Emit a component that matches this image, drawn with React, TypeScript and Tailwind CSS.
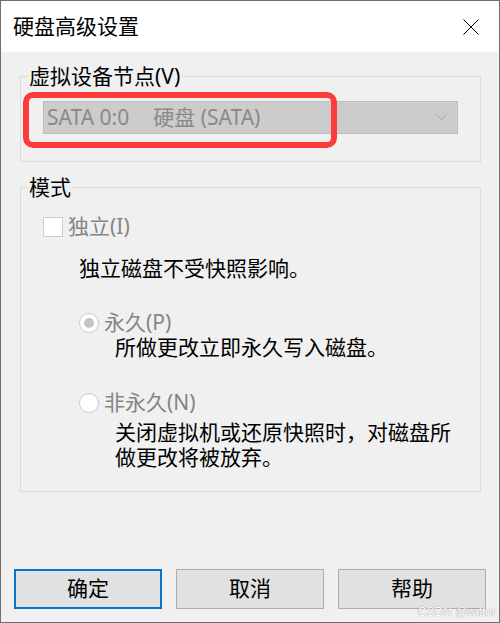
import React from 'react';

const font = "font-['Noto_Sans','Noto_Sans_CJK_SC',sans-serif]";

const DialogButton = ({ label, focused }: { label: string; focused?: boolean }) => (
  <button
    className={
      focused
        ? 'w-[148px] h-[40px] bg-[#e1e1e1] border-2 border-[#0078d7] text-[21px] text-black'
        : 'w-[148px] h-[40px] bg-[#e1e1e1] border border-[#adadad] text-[21px] text-black'
    }
  >
    {label}
  </button>
);

const App = () => {
  return (
    <div className={`relative w-[500px] h-[623px] border border-[#6f6f6f] bg-[#f0f0f0] flex flex-col ${font}`}>
      {/* title bar */}
      <div className="h-[51px] bg-white flex items-center justify-between pl-[12px] pr-[20px]">
        <span className="text-[21px] text-black leading-none">硬盘高级设置</span>
        <svg width="16" height="16" viewBox="0 0 16 16">
          <path d="M0.5 0.5 L15.5 15.5 M15.5 0.5 L0.5 15.5" stroke="#000" strokeWidth="1" />
        </svg>
      </div>

      <div className="flex-1 px-[19px] pt-[11px]">
        <fieldset className="w-[461px] border border-[#dcdcdc] px-[22px] pb-[27px]">
          <legend className="-ml-[15px] px-[1px] text-[21px] leading-[27px] text-black">虚拟设备节点(V)</legend>
          <div className="mt-[11px] h-[33px] bg-[#cccccc] border border-[#bdbdbd] flex items-center justify-between pl-[3px] pr-[10px] text-[21px] text-[#898989]">
            <span className="flex gap-[24px]">
              <span>SATA 0:0</span>
              <span>硬盘 (SATA)</span>
            </span>
            <svg width="11" height="7" viewBox="0 0 11 7">
              <path d="M0.5 0.5 L5.5 5.5 L10.5 0.5" fill="none" stroke="#a3a3a3" strokeWidth="1" />
            </svg>
          </div>
        </fieldset>

        <fieldset className="mt-[12px] w-[461px] border border-[#dcdcdc] pl-[22px] pr-[10px] pb-[21px]">
          <legend className="-ml-[15px] px-[1px] text-[21px] leading-[27px] text-black">模式</legend>

          <div className="mt-[13px] h-[25px] flex items-center">
            <span className="w-[20px] h-[20px] bg-white border border-[#cccccc]" />
            <span className="ml-[5px] text-[21px] leading-[25px] text-[#858585]">独立(I)</span>
          </div>
          <div className="mt-[17px] ml-[36px] text-[21px] leading-[25px] text-black">独立磁盘不受快照影响。</div>

          <div className="ml-[36px]">
            <div className="mt-[29px] h-[25px] flex items-center">
              <span className="w-[20px] h-[20px] rounded-full bg-white border border-[#c9c9c9] flex items-center justify-center">
                <span className="w-[10px] h-[10px] rounded-full bg-[#c4c4c4]" />
              </span>
              <span className="ml-[5px] text-[21px] leading-[25px] text-[#858585]">永久(P)</span>
            </div>
            <div className="ml-[36px] text-[21px] leading-[25px] text-black">所做更改立即永久写入磁盘。</div>

            <div className="mt-[30px] h-[25px] flex items-center">
              <span className="w-[20px] h-[20px] rounded-full bg-white border border-[#c9c9c9]" />
              <span className="ml-[5px] text-[21px] leading-[25px] text-[#858585]">非永久(N)</span>
            </div>
            <div className="mt-[5px] ml-[36px] w-[345px] text-[21px] leading-[25px] text-black">
              关闭虚拟机或还原快照时，对磁盘所做更改将被放弃。
            </div>
          </div>
        </fieldset>
      </div>

      <div className="flex gap-[14px] pl-[13px] pb-[13px]">
        <DialogButton label="确定" focused />
        <DialogButton label="取消" />
        <DialogButton label="帮助" />
      </div>

      {/* red annotation */}
      <div className="absolute left-[22px] top-[91px] w-[314px] h-[56px] border-[6px] border-[#fe3b3b] rounded-[10px]" />

      {/* watermark */}
      <span className="absolute right-[3px] bottom-[4px] text-[12px] leading-none text-white [text-shadow:0_0_1px_#7a7a7a] font-['Liberation_Sans',sans-serif]">
        CSDN @wittor
      </span>
    </div>
  );
};

export default App;
